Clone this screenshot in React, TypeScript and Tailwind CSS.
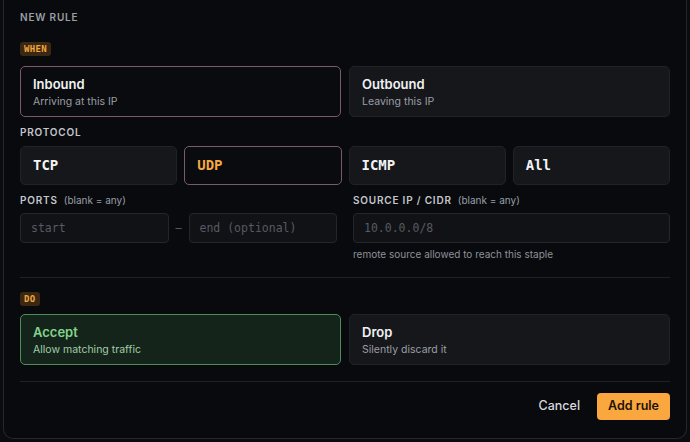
import React from 'react'

const sans = { fontFamily: 'Inter, "Noto Sans", sans-serif' }

function Badge({ children }: { children: React.ReactNode }) {
  return (
    <div className="flex h-[14px] shrink-0">
      <span className="flex h-[14px] items-center rounded-[3px] bg-[#3a2812] px-[4px] font-['DejaVu_Sans_Mono',monospace] text-[9px] leading-none font-bold tracking-[0.04em] text-[#f4a63e]">
        {children}
      </span>
    </div>
  )
}

function Label({ children, hint }: { children: React.ReactNode; hint?: string }) {
  return (
    <div className="flex h-[12px] shrink-0 items-center gap-[6px]">
      <span className="text-[10px] font-semibold tracking-[0.08em] text-[#c3c6cc]">{children}</span>
      {hint && <span className="text-[10px] text-[#9a9ea6]">{hint}</span>}
    </div>
  )
}

function Choice({
  title,
  sub,
  variant = 'off',
}: {
  title: string
  sub: string
  variant?: 'off' | 'on' | 'accept'
}) {
  const box =
    variant === 'on'
      ? 'border-[#7b5a6b] bg-[#0a0b0e]'
      : variant === 'accept'
        ? 'border-[#4f8c58] bg-[#15241a]'
        : 'border-[#202227] bg-[#16171b]'
  const t = variant === 'accept' ? 'text-[#82d48c]' : 'text-[#f1f2f4]'
  const s = variant === 'accept' ? 'text-[#a2cba8]' : 'text-[#9a9ea6]'
  return (
    <div className={`flex h-[51px] flex-1 flex-col rounded-[5px] border px-3 pt-[9px] ${box}`}>
      <div className={`text-[13px] leading-[16px] font-semibold ${t}`}>{title}</div>
      <div className={`mt-[3px] text-[10.5px] leading-[14px] ${s}`}>{sub}</div>
    </div>
  )
}

function Proto({ name, active }: { name: string; active?: boolean }) {
  return (
    <div
      className={`flex h-[39px] flex-1 items-center rounded-[5px] border px-3 font-['DejaVu_Sans_Mono',monospace] text-[14px] font-bold ${
        active ? 'border-[#7b5a6b] bg-[#0a0b0e] text-[#f6a843]' : 'border-[#202227] bg-[#16171b] text-[#f3f4f6]'
      }`}
    >
      {name}
    </div>
  )
}

function Field({ placeholder }: { placeholder: string }) {
  return (
    <input
      placeholder={placeholder}
      className="h-[30px] w-full min-w-0 flex-1 rounded-[4px] border border-[#24262b] bg-[#111216] px-[10px] font-['DejaVu_Sans_Mono',monospace] text-[11.5px] text-[#d0d2d6] outline-none placeholder:text-[#575a60]"
    />
  )
}

export default function App() {
  return (
    <div className="h-[442px] w-[690px] overflow-hidden bg-[#0b0c0f] px-[3px] pb-[3px]" style={sans}>
      <div className="flex h-full flex-col rounded-b-[10px] border border-t-0 border-[#25272b] bg-[#090a0d] px-4 pt-[10px]">
        <div className="h-[14px] shrink-0 text-[10px] leading-[14px] font-semibold tracking-[0.08em] text-[#9a9ea5]">NEW RULE</div>

        <div className="mt-[18px]">
          <Badge>WHEN</Badge>
        </div>
        <div className="mt-[10px] flex shrink-0 gap-[8px]">
          <Choice title="Inbound" sub="Arriving at this IP" variant="on" />
          <Choice title="Outbound" sub="Leaving this IP" />
        </div>

        <div className="mt-[9px]">
          <Label>PROTOCOL</Label>
        </div>
        <div className="mt-[8px] flex shrink-0 gap-[7px]">
          <Proto name="TCP" />
          <Proto name="UDP" active />
          <Proto name="ICMP" />
          <Proto name="All" />
        </div>

        <div className="mt-[9px] grid shrink-0 grid-cols-2 gap-x-4">
          <div>
            <Label hint="(blank = any)">PORTS</Label>
            <div className="mt-[7px] flex items-center">
              <Field placeholder="start" />
              <span className="w-[20px] text-center text-[12px] text-[#55585e]">–</span>
              <Field placeholder="end (optional)" />
            </div>
          </div>
          <div>
            <Label hint="(blank = any)">SOURCE IP / CIDR</Label>
            <div className="mt-[7px] flex">
              <Field placeholder="10.0.0.0/8" />
            </div>
            <div className="mt-[5px] text-[10px] leading-[12px] text-[#8d9199]">remote source allowed to reach this staple</div>
          </div>
        </div>

        <div className="mt-[17px] h-px shrink-0 bg-[#1f2125]" />

        <div className="mt-[14px]">
          <Badge>DO</Badge>
        </div>
        <div className="mt-[8px] flex shrink-0 gap-[8px]">
          <Choice title="Accept" sub="Allow matching traffic" variant="accept" />
          <Choice title="Drop" sub="Silently discard it" />
        </div>

        <div className="mt-[16px] h-px shrink-0 bg-[#1f2125]" />

        <div className="mt-[11px] flex shrink-0 items-center justify-end gap-[17px]">
          <button className="text-[12.5px] font-medium text-[#d6d8dc]">Cancel</button>
          <button className="h-[27px] rounded-[4px] bg-[#f9a73e] px-[11px] text-[12.5px] font-semibold text-[#1b1207]">
            Add rule
          </button>
        </div>
      </div>
    </div>
  )
}
